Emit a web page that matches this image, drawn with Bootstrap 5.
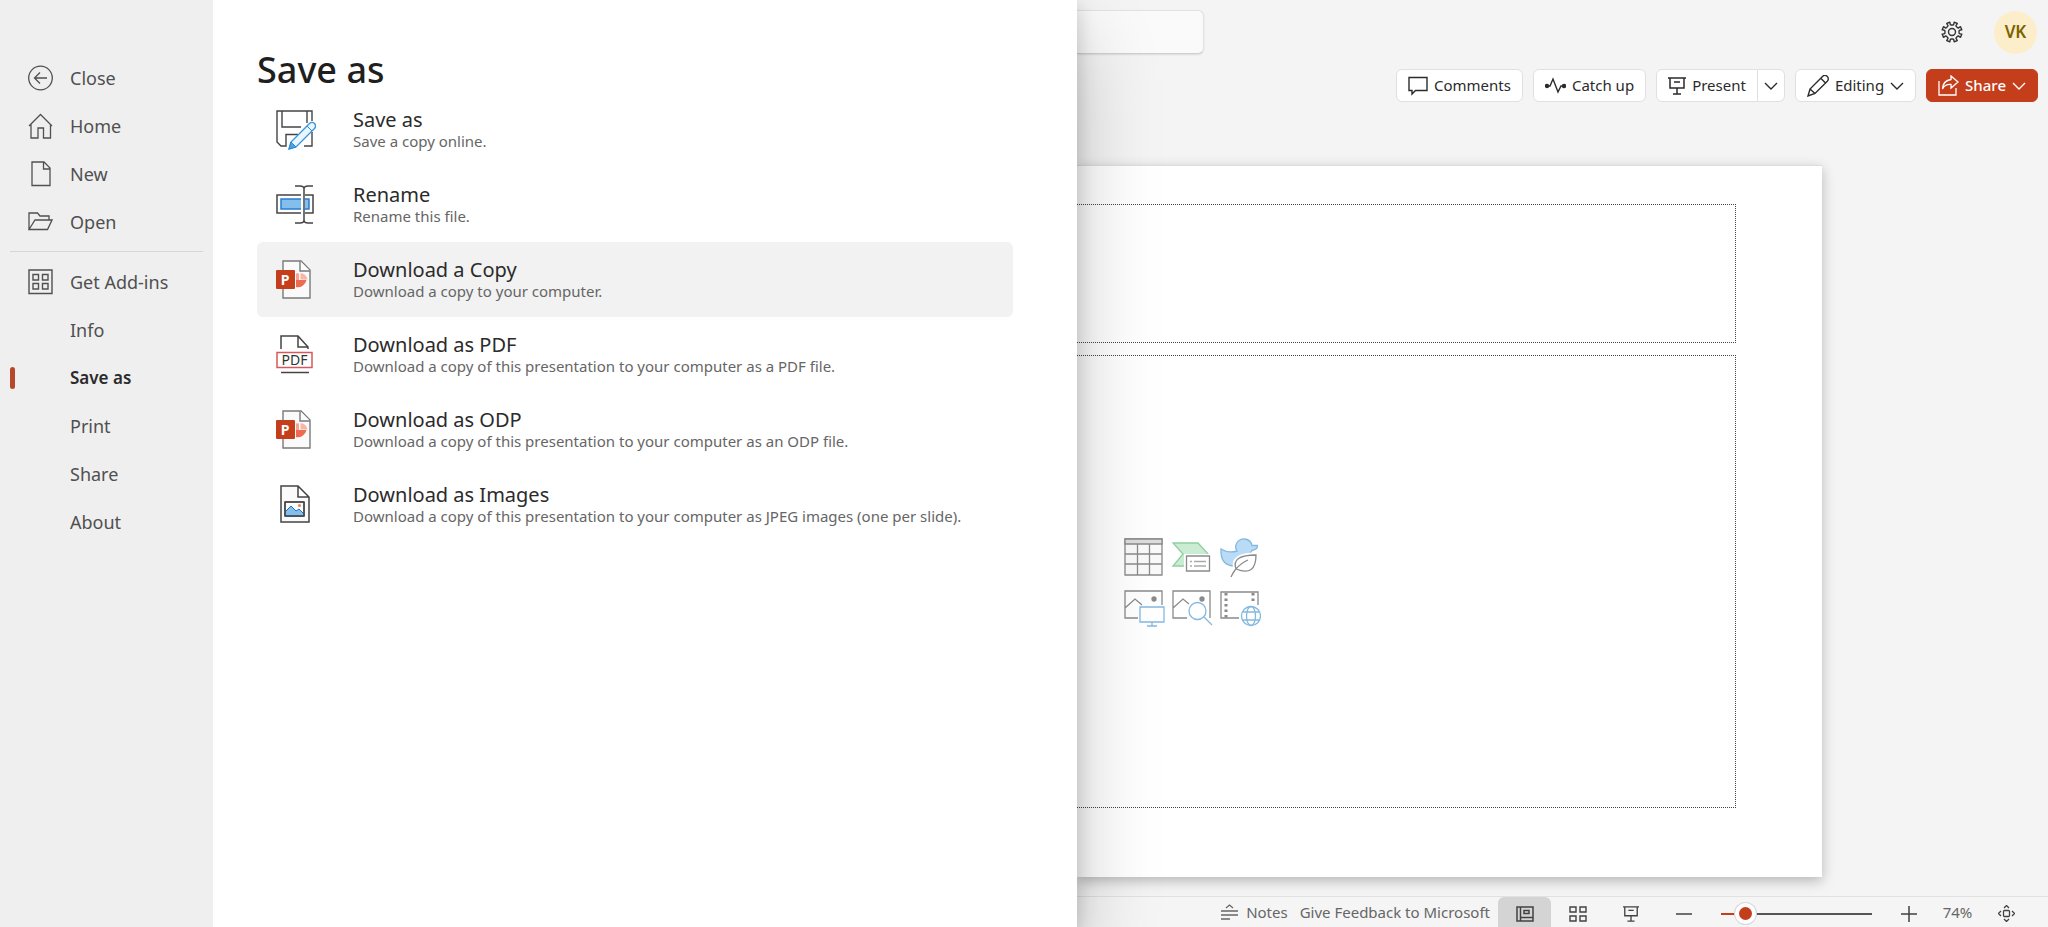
<!DOCTYPE html>
<html lang="en">
<head>
<meta charset="utf-8">
<meta name="viewport" content="width=device-width, initial-scale=1">
<title>PowerPoint - Save as</title>
<link href="https://cdn.jsdelivr.net/npm/bootstrap@5.3.0/dist/css/bootstrap.min.css" rel="stylesheet">
<style>
  :root { --accent: #c43e1c; --ink: #2b2b2b; --muted-ink: #666; }
  body { font-family: "Noto Sans", "Open Sans", sans-serif; background: #f4f4f4; color: var(--ink); }
  svg { display: block; fill: none; stroke: currentColor; flex: none; }
  svg text { stroke: none; }

  /* File menu drawer */
  .backstage { z-index: 2; box-shadow: 0 34px 77px rgba(0,0,0,.22), 0 6px 19px rgba(0,0,0,.18); }
  .side-nav { width: 213px; background: #efefef; padding-top: 54px; }
  .side-link { height: 48px; padding-left: 28px; gap: 17px; font-size: 18px; color: #505050; text-decoration: none; position: relative; }
  .side-link .slot { width: 25px; }
  .side-link.current { font-weight: 600; font-size: 17px; color: var(--ink); }
  .side-link.current::before { content: ""; position: absolute; left: 10px; top: 13px; width: 5px; height: 22px; border-radius: 3px; background: #b7472a; }
  .side-rule { margin: 5px 10px 6px; border-top: 1px solid #d6d6d6; opacity: 1; }
  .save-pane { width: 864px; background: #fff; padding: 48px 64px 0 44px; }
  .save-pane h1 { font-size: 36px; line-height: 44px; font-weight: 500; margin: 0; color: #1f1f1f; }
  .save-item { height: 75px; padding: 0 0 0 19px; border: 0; border-radius: 6px; background: none; text-align: left; gap: 37px; color: var(--ink); }
  .save-item.hovered, .save-item:hover { background: #f2f2f2; }
  .save-item strong { display: block; font-weight: 400; font-size: 20px; line-height: 22px; }
  .save-item small { display: block; font-size: 15px; line-height: 20px; color: var(--muted-ink); }

  /* Editor behind the drawer */
  .top-row { height: 64px; padding: 10px 11px 10px 0; }
  .search-input { width: 127px; height: 44px; border: 1px solid #e2e2e2; border-left: 0; border-bottom-color: #d0d0d0; border-radius: 0 6px 6px 0; background: #fafafa; box-shadow: 0 1px 2px rgba(0,0,0,.1); }
  .icon-btn { border: 0; background: none; padding: 0; color: #333; margin-right: 30px; }
  .avatar-btn { width: 43px; height: 43px; border: 0; border-radius: 50%; background: #fdeecb; color: #7a6400; font-weight: 600; font-size: 17px; }
  .command-row { gap: 10px; padding: 5px 10px 0 0; }
  .cmd { height: 33px; display: flex; align-items: center; gap: 6px; padding: 0 11px; background: #fff; border: 1px solid #e0e0e0; border-radius: 6px; font-size: 15px; color: var(--ink); white-space: nowrap; }
  .cmd.primary { background: var(--accent); border-color: var(--accent); color: #fff; font-weight: 500; }
  .cmd-group .cmd:first-child { border-radius: 6px 0 0 6px; }
  .cmd-group .cmd:last-child { border-radius: 0 6px 6px 0; border-left: 0; padding: 0 6px; }
  .canvas-area { padding: 63px 226px 19px 0; }
  .slide { background: #fff; padding: 38px 86px 69px 0; border-top: 1px solid #dedede; box-shadow: 0 4px 12px rgba(0,0,0,.25); gap: 12px; }
  .placeholder-box { border: 1px dotted #444; border-width: 1px 1px 1px 0; }
  .title-box { height: 139px; }
  .insert-grid { display: grid; grid-template-columns: repeat(3, 40px); gap: 8px; padding-left: 46px; color: #8a8a8a; }

  .status-row { height: 31px; border-top: 1px solid #e1e1e1; padding-right: 15px; font-size: 15px; color: var(--muted-ink); background: #f5f5f5; }
  .status-row a, .status-row button { color: inherit; text-decoration: none; }
  .view-btn { width: 53px; height: 100%; border: 0; background: none; display: flex; align-items: center; justify-content: center; padding: 3px 0 0; }
  .status-row .view-btn { color: #424242; }
  .view-btn.active { background: #d4d4d4; border-radius: 6px 6px 0 0; }
  .zoom-range { -webkit-appearance: none; appearance: none; width: 151px; height: 22px; margin: 3px 10px 0 11px; background: linear-gradient(90deg, var(--accent) 16%, #555 16%) center / 100% 2px no-repeat; }
  .zoom-range::-webkit-slider-thumb { -webkit-appearance: none; width: 21px; height: 21px; border-radius: 50%; border: 4px solid #fff; background: var(--accent); box-shadow: 0 0 0 1px #d8d8d8; }
  .zoom-label { width: 45px; }
</style>
</head>
<body>
<svg width="0" height="0" class="position-absolute" aria-hidden="true">
  <symbol id="ppt-page" viewBox="0 0 40 40">
    <path d="M7 1h18l9 9v28H7z" fill="#fafafa" stroke="#7a7a7a" stroke-width="1.4"/>
    <path d="M24 1v10h10" fill="#fff" stroke="#7a7a7a" stroke-width="1.4"/>
    <path d="M20 20h10.500a9 9 0 0 1-10.500 7z" fill="#ed6c4f" stroke="none"/>
    <path d="M20 13.500q2-.5 3 0v6.500h-3z" fill="#f6a594" stroke="none"/>
    <path d="M24.500 13a8 8 0 0 1 7 6.500h-7z" fill="#f9b5a5" stroke="none"/>
    <rect x="0" y="10" width="19" height="19" rx="1" fill="#c43e1c" stroke="none"/>
  </symbol>
  <symbol id="chevron" viewBox="0 0 14 10"><path d="M1 2l6 6 6-6" stroke-width="1.4"/></symbol>
  <symbol id="present" viewBox="0 0 18 18"><path d="M0 1h18M2 1v10h14V1M6 5h6M9 11v6M5 17h8" stroke-width="1.5"/></symbol>
</svg>

<div class="d-flex min-vh-100">
  <div class="backstage d-flex flex-shrink-0 position-relative">
    <nav class="side-nav" aria-label="File">
      <a href="#" class="side-link d-flex align-items-center"><svg class="slot" width="25" height="26" viewBox="0 0 25 26" stroke-width="1.3"><circle cx="12.500" cy="13" r="11.800"/><path d="M19 13H7M12 7.500L6.500 13l5.500 5.500"/></svg>Close</a>
      <a href="#" class="side-link d-flex align-items-center"><svg class="slot" width="25" height="26" viewBox="0 0 25 26" stroke-width="1.3"><path d="M1 13L12.500 1.500 24 13M3 11.500V25h7V15h5.500v10h7V11.500"/></svg>Home</a>
      <a href="#" class="side-link d-flex align-items-center"><svg class="slot" width="25" height="26" viewBox="0 0 25 26" stroke-width="1.3"><path d="M4 1h12l6 6v17.500H4zM15.500 1v7H22"/></svg>New</a>
      <a href="#" class="side-link d-flex align-items-center"><svg class="slot" width="25" height="26" viewBox="0 0 25 26" stroke-width="1.3"><path d="M1 20.500V4h8.500l2.500 3h9v4M1 20.500L7 11h17l-4.500 9.500z"/></svg>Open</a>
      <hr class="side-rule">
      <a href="#" class="side-link d-flex align-items-center"><svg class="slot" width="25" height="26" viewBox="0 0 25 26" stroke-width="1.4"><path d="M1 1h23v23.500H1zM5 5.500h5.500V11H5zM14.500 5.500H20V11h-5.500zM5 14.500h5.500V20H5zM14.500 14.500H20V20h-5.500z"/></svg>Get Add-ins</a>
      <a href="#" class="side-link d-flex align-items-center"><span class="slot"></span>Info</a>
      <a href="#" class="side-link current d-flex align-items-center" aria-current="page"><span class="slot"></span>Save as</a>
      <a href="#" class="side-link d-flex align-items-center"><span class="slot"></span>Print</a>
      <a href="#" class="side-link d-flex align-items-center"><span class="slot"></span>Share</a>
      <a href="#" class="side-link d-flex align-items-center"><span class="slot"></span>About</a>
    </nav>

    <section class="save-pane">
      <h1>Save as</h1>
      <button class="save-item d-flex align-items-center w-100">
        <svg width="40" height="40" viewBox="0 0 40 40"><path d="M36 11V1H1v31l4 4h5V24.500h12M28 36h8V22M6 1v16h19M31 1v12" stroke="#444" stroke-width="1.400"/><path d="M13 39l2-7L33.500 13.500a3 3 0 0 1 5 5L20 37z" fill="#eaf6ff" stroke="#3a96dd" stroke-width="1.400"/><path d="M13 39l2-7 5 5zM31 16l5 5" fill="#4ba3e3" stroke="#2b88d0"/></svg>
        <span><strong>Save as</strong><small>Save a copy online.</small></span>
      </button>
      <button class="save-item d-flex align-items-center w-100">
        <svg width="40" height="40" viewBox="0 0 40 40"><path d="M25 10H1v18h24M29 10h8v18h-8" stroke="#444" stroke-width="1.500"/><path d="M25 14H5v10h20M29 14h4v10h-4" fill="#83beec" stroke="#2b7cd3" stroke-width="1.500"/><path d="M19 1h5q4 0 4 3 0-3 4-3h5M28 4v31M19 38h5q4 0 4-3 0 3 4 3h5" stroke="#444" stroke-width="1.500"/></svg>
        <span><strong>Rename</strong><small>Rename this file.</small></span>
      </button>
      <button class="save-item hovered d-flex align-items-center w-100">
        <svg width="40" height="40" viewBox="0 0 40 40"><use href="#ppt-page"/><text x="9" y="25" text-anchor="middle" font-size="14" font-weight="700" fill="#fff">P</text></svg>
        <span><strong>Download a Copy</strong><small>Download a copy to your computer.</small></span>
      </button>
      <button class="save-item d-flex align-items-center w-100">
        <svg width="40" height="40" viewBox="0 0 40 40"><path d="M5 14V1h17l10 11v2M22 1v11h10M5 37.500h28" stroke="#444" stroke-width="1.500"/><path d="M1 17.500h35v15H1z" fill="#fff" stroke="#d65a5a" stroke-width="1.500"/><text x="18.500" y="30" text-anchor="middle" font-size="14" fill="#333">PDF</text></svg>
        <span><strong>Download as PDF</strong><small>Download a copy of this presentation to your computer as a PDF file.</small></span>
      </button>
      <button class="save-item d-flex align-items-center w-100">
        <svg width="40" height="40" viewBox="0 0 40 40"><use href="#ppt-page"/><text x="9" y="25" text-anchor="middle" font-size="14" font-weight="700" fill="#fff">P</text></svg>
        <span><strong>Download as ODP</strong><small>Download a copy of this presentation to your computer as an ODP file.</small></span>
      </button>
      <button class="save-item d-flex align-items-center w-100">
        <svg width="40" height="40" viewBox="0 0 40 40"><path d="M5 1h17l11 11v25H5zM22 1v11h11" fill="#fafafa" stroke="#444" stroke-width="1.500"/><path d="M9 17h19v14H9z" fill="#fff"/><path d="M9 27l6-6 5 5 3-2 5 5v2H9z" fill="#83beec" stroke="#1f6fb8"/><circle cx="23.500" cy="20.500" r="1.500" fill="#e8824a" stroke="none"/><path d="M9 17h19v14H9z" stroke="#444" stroke-width="1.500"/></svg>
        <span><strong>Download as Images</strong><small>Download a copy of this presentation to your computer as JPEG images (one per slide).</small></span>
      </button>
    </section>
  </div>

  <main class="d-flex flex-column flex-grow-1">
    <header class="top-row d-flex align-items-center">
      <input class="search-input" type="search" aria-label="Search">
      <button class="icon-btn ms-auto" aria-label="Settings"><svg width="24" height="24" viewBox="0 0 24 24" stroke-width="1.400" stroke-linejoin="round"><path d="M9.800 2.200L10.400 4.800Q12 5.200 13.600 4.800L14.200 2.200 17.300 3.500 15.900 5.800Q17 7.500 18.200 8.100L20.500 6.700 21.800 9.800 19.200 10.400Q18.800 12 19.200 13.600L21.800 14.200 20.500 17.300 18.200 15.900Q16.500 17 15.900 18.200L17.300 20.500 14.200 21.800 13.600 19.200Q12 18.800 10.400 19.200L9.800 21.800 6.700 20.500 8.100 18.200Q7 16.500 5.800 15.900L3.500 17.300 2.200 14.200 4.800 13.600Q5.200 12 4.800 10.400L2.200 9.800 3.500 6.700 5.800 8.100Q7.500 7 8.100 5.800L6.700 3.500z"/><circle cx="12" cy="12" r="3.500"/></svg></button>
      <button class="avatar-btn p-0">VK</button>
    </header>

    <div class="command-row d-flex justify-content-end">
      <button class="cmd"><svg width="20" height="20" viewBox="0 0 20 20" stroke-width="1.400"><path d="M1 1.500h18v13H7.500L4 18v-3.500H1z"/></svg>Comments</button>
      <button class="cmd"><svg width="21" height="18" viewBox="0 0 21 18" stroke-width="1.400"><path d="M1 9h4l3-7 5 13 3-6h4"/><circle cx="2" cy="9" r="1.500" fill="currentColor"/><circle cx="19" cy="9" r="1.500" fill="currentColor"/></svg>Catch up</button>
      <div class="cmd-group d-flex">
        <button class="cmd"><svg width="18" height="18"><use href="#present"/></svg>Present</button>
        <button class="cmd" aria-label="Present options"><svg width="14" height="10"><use href="#chevron"/></svg></button>
      </div>
      <button class="cmd"><svg width="22" height="22" viewBox="0 0 22 22" stroke-width="1.400"><path d="M1 21l2-7L15.500 1.500a3.200 3.200 0 0 1 4.800 4.800L8 18.500zM14 3.500L18.500 8M3 14l5 4.500"/></svg>Editing<svg width="14" height="10"><use href="#chevron"/></svg></button>
      <button class="cmd primary"><svg width="21" height="21" viewBox="0 0 21 21" stroke-width="1.300"><path d="M1 6v14h17v-7M13 1l7 6-7 6V9.500Q7 9 4.500 14 5 5.500 13 4.500z"/></svg>Share<svg width="14" height="10"><use href="#chevron"/></svg></button>
    </div>

    <div class="canvas-area d-flex flex-grow-1">
      <div class="slide d-flex flex-column flex-grow-1">
        <div class="placeholder-box title-box"></div>
        <div class="placeholder-box flex-grow-1 d-flex align-items-center">
          <div class="insert-grid">
            <svg width="40" height="42" viewBox="0 0 40 42" stroke-width="1.300"><path d="M2 3h37v36H2z" fill="#fafafa"/><path d="M2 3h37v5H2z" fill="#ddd"/><path d="M2 18h37M2 28h37M14.500 8v31M26.500 8v31"/></svg>
            <svg width="40" height="42" viewBox="0 0 40 42" stroke-width="1.300"><path d="M2 7h25l11 12H15v11H2l10-12z" fill="#c9ecd2" stroke="#8fcfa2"/><path d="M13 18h28v20H13z" fill="#fff" stroke="none"/><path d="M15.500 20h23v15h-23z" fill="#fff"/><path d="M19 25.500h2M23 25.500h12M19 30h2M23 30h12" stroke="#aaa"/></svg>
            <svg width="40" height="42" viewBox="0 0 40 42" stroke-width="1.300"><path d="M2 13q7 4.500 16 2-2.500-4-.5-7.500 3-5 8.500-4.500 6 1 7 6.500h5.500q0 4-5.500 5-2 4-5 6L16 30q-15 0-14-17z" fill="#b9dbf5" stroke="#84b8df"/><path d="M12 41q3-6 5-8-5-14 20-14 0 22-20 14 5-6 12-9" fill="none" stroke="#fff" stroke-width="5"/><path d="M12 41q3-6 5-8-5-14 20-14 0 22-20 14 5-6 12-9" fill="#fff"/></svg>
            <svg width="42" height="42" viewBox="0 0 42 42" stroke-width="1.300"><path d="M15 32H2V5h37v14M2 22l10-9 7 6"/><circle cx="31" cy="13" r="2" fill="currentColor"/><path d="M17 21h24v15H17zM29 36v4M24 40h10" stroke="#84b8df"/></svg>
            <svg width="42" height="42" viewBox="0 0 42 42" stroke-width="1.300"><path d="M16 32H2V5h37v27M2 22l10-9 6 5"/><circle cx="31" cy="13" r="2" fill="currentColor"/><path d="M18 25a8.500 8.500 0 1 0 17 0a8.500 8.500 0 1 0-17 0M33 31l8 8" stroke="#84b8df"/></svg>
            <svg width="42" height="42" viewBox="0 0 42 42" stroke-width="1.300"><path d="M20 32H2V6h37v13"/><path d="M7 7v25M34 7v10" stroke-width="3" stroke-dasharray="2.500 3"/><g stroke="#84b8df"><circle cx="32" cy="30" r="9.500"/><ellipse cx="32" cy="30" rx="4.500" ry="9.500"/><path d="M24 26h16M24 34h16"/></g></svg>
          </div>
        </div>
      </div>
    </div>

    <footer class="status-row d-flex align-items-center justify-content-end">
      <a href="#" class="d-flex align-items-center gap-2 me-2"><svg width="17" height="16" viewBox="0 0 17 16" stroke-width="1.300"><path d="M0 7h17M0 11h17M0 15h9M5 4l3.500-3L12 4"/></svg>Notes</a>
      <a href="#" class="ms-1 me-2">Give Feedback to Microsoft</a>
      <button class="view-btn active" aria-label="Normal view"><svg width="18" height="16" viewBox="0 0 18 16" stroke-width="1.500"><path d="M1 1h16v14H1zM4.500 1v14M4.500 11.500H17M8 4.500h5v3H8z"/></svg></button>
      <button class="view-btn" aria-label="Slide sorter"><svg width="18" height="16" viewBox="0 0 18 16" stroke-width="1.400"><path d="M1 1h6v5H1zM11 1h6v5h-6zM1 10h6v5H1zM11 10h6v5h-6z"/></svg></button>
      <button class="view-btn" aria-label="Slide show"><svg width="16" height="16"><use href="#present"/></svg></button>
      <button class="view-btn" aria-label="Zoom out"><svg width="16" height="16" viewBox="0 0 16 16" stroke-width="1.500"><path d="M0 8h16"/></svg></button>
      <input class="zoom-range" type="range" min="0" max="100" value="11" aria-label="Zoom">
      <button class="view-btn" aria-label="Zoom in"><svg width="16" height="16" viewBox="0 0 16 16" stroke-width="1.500"><path d="M0 8h16M8 0v16"/></svg></button>
      <span class="zoom-label text-center">74%</span>
      <button class="view-btn" aria-label="Fit to window"><svg width="17" height="17" viewBox="0 0 17 17" stroke-width="1.300"><rect x="5.500" y="5.500" width="6" height="6" rx="1"/><path d="M6 3l2.500-2.500L11 3M6 14l2.500 2.500L11 14M3 6L.5 8.500 3 11M14 6l2.500 2.500L14 11"/></svg></button>
    </footer>
  </main>
</div>
<script src="https://cdn.jsdelivr.net/npm/bootstrap@5.3.0/dist/js/bootstrap.bundle.min.js"></script>
</body>
</html>
